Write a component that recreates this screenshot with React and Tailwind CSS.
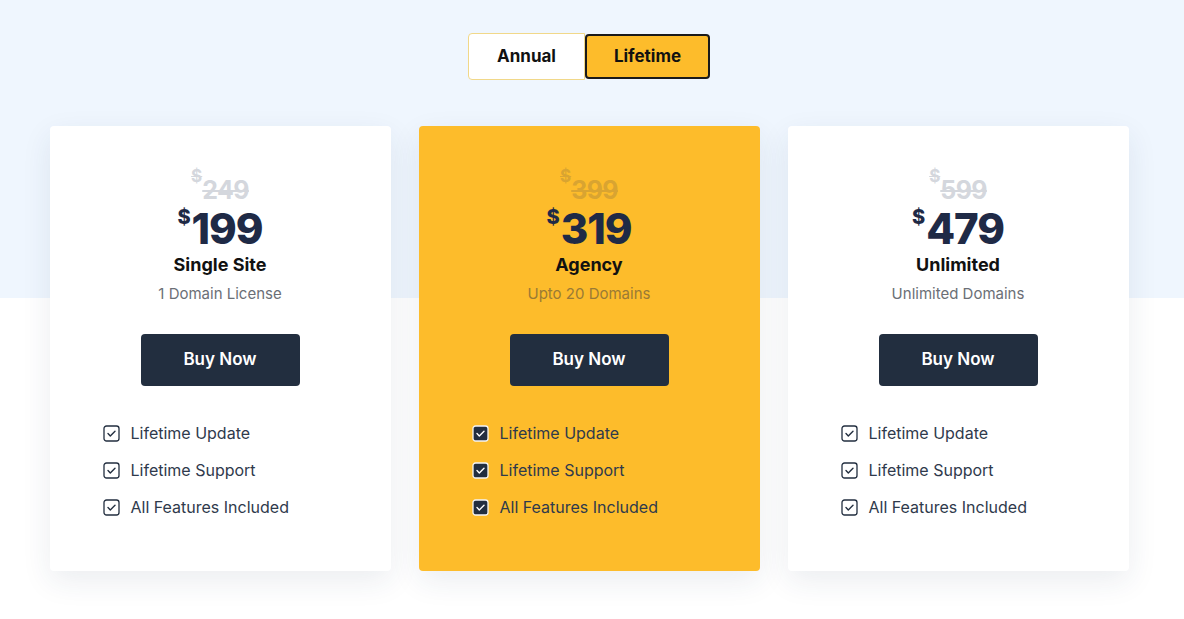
import React, { useState } from "react";

const plans = [
  { old: "249", price: "199", name: "Single Site", desc: "1 Domain License", featured: false },
  { old: "399", price: "319", name: "Agency", desc: "Upto 20 Domains", featured: true },
  { old: "599", price: "479", name: "Unlimited", desc: "Unlimited Domains", featured: false },
];

const features = ["Lifetime Update", "Lifetime Support", "All Features Included"];

const CheckBox = ({ filled }) => (
  <svg width="17" height="17" viewBox="0 0 17 17" className="shrink-0">
    <rect
      x="1"
      y="1"
      width="15"
      height="15"
      rx="2.5"
      fill={filled ? "#222e3f" : "none"}
      stroke={filled ? "#f3f4f6" : "#222e3f"}
      strokeWidth="1.3"
    />
    <path
      d="M5 8.6l2.3 2.3L12 6.2"
      fill="none"
      stroke={filled ? "#ffffff" : "#222e3f"}
      strokeWidth="1.4"
      strokeLinecap="round"
      strokeLinejoin="round"
    />
  </svg>
);

const App = () => {
  const [mode, setMode] = useState("lifetime");

  return (
    <div
      className="relative w-full min-h-[619px] bg-white"
      style={{ fontFamily: "Inter, 'Noto Sans', sans-serif" }}
    >
      {/* top tint */}
      <div className="absolute left-0 right-0 top-0 h-[298px] bg-[#eff6fe]" />

      <div className="relative flex flex-col items-center pt-[33px] pr-[6px]">
        {/* toggle */}
        <div className="flex h-[47px]">
          <button
            onClick={() => setMode("annual")}
            className={`w-[117px] h-[47px] rounded-l-[4px] text-[17px] font-bold text-[#111] ${
              mode === "annual"
                ? "bg-[#fdbc2b] border-2 border-[#1a1a1a] rounded-[4px]"
                : "bg-white border border-[#f1d889]"
            }`}
          >
            Annual
          </button>
          <button
            onClick={() => setMode("lifetime")}
            className={`w-[125px] h-[45px] mt-px text-[17px] font-bold text-[#111] ${
              mode === "lifetime"
                ? "bg-[#fdbc2b] border-2 border-[#1a1a1a] rounded-[4px]"
                : "bg-white border border-[#f1d889] rounded-r-[4px]"
            }`}
          >
            Lifetime
          </button>
        </div>

        {/* cards */}
        <div className="flex gap-[28px] mt-[46px]">
          {plans.map((plan) => (
            <div
              key={plan.name}
              className={`w-[341px] h-[445px] rounded-[4px] flex flex-col items-center pt-[40px] shadow-[0_10px_30px_rgba(30,50,90,0.09)] ${
                plan.featured ? "bg-[#fdbc2b]" : "bg-white"
              }`}
            >
              {/* old price */}
              <div
                className={`flex items-start font-bold line-through leading-none ${
                  plan.featured ? "text-[#d9a431]" : "text-[#d4d7dd]"
                }`}
              >
                <span className="text-[17px] mt-[2px]">$</span>
                <span className="text-[25px] mt-[12px] tracking-tight">{plan.old}</span>
              </div>
              {/* price */}
              <div className="flex items-start text-[#1f2a46] font-extrabold leading-none mt-[5px]">
                <span className="text-[20px] mt-[-1px] mr-[1px]">$</span>
                <span className="text-[42px] tracking-tight">{plan.price}</span>
              </div>
              <div className="text-[18px] font-bold text-[#111] mt-[3px] leading-[24px]">
                {plan.name}
              </div>
              <div
                className={`text-[15px] mt-[7px] leading-[20px] ${
                  plan.featured ? "text-[#9a7a35]" : "text-[#6b6f76]"
                }`}
              >
                {plan.desc}
              </div>
              <button className="mt-[30px] w-[159px] h-[52px] rounded-[4px] bg-[#222e3f] text-white text-[17px] font-semibold">
                Buy Now
              </button>
              <ul className="self-start ml-[53px] mt-[36px] flex flex-col gap-[15px]">
                {features.map((f) => (
                  <li key={f} className="flex items-center gap-[11px] h-[22px]">
                    <CheckBox filled={plan.featured} />
                    <span className="text-[16px] text-[#2f3a4c]">{f}</span>
                  </li>
                ))}
              </ul>
            </div>
          ))}
        </div>
      </div>
    </div>
  );
};

export default App;
